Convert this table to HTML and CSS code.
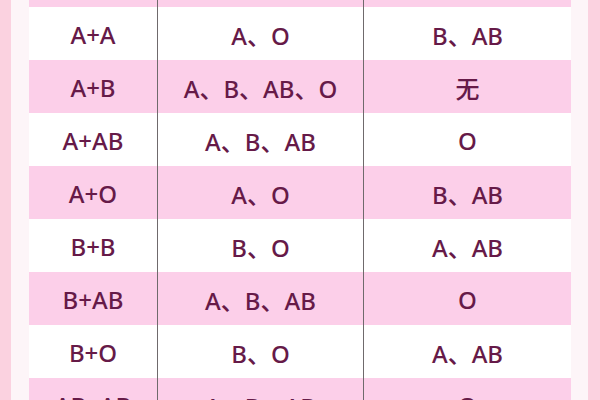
FILE: index.html
```html
<!DOCTYPE html>
<html lang="zh">
<head>
<meta charset="utf-8">
<link rel="stylesheet" href="styles.css">
</head>
<body>
<div class="frame">
  <div class="sheet">
    <div class="table">
      <div class="row pink top"><div class="cell"></div><div class="cell"></div><div class="cell"></div></div>
      <div class="row"><div class="cell">A+A</div><div class="cell">A、O</div><div class="cell">B、AB</div></div>
      <div class="row pink"><div class="cell">A+B</div><div class="cell">A、B、AB、O</div><div class="cell">无</div></div>
      <div class="row"><div class="cell">A+AB</div><div class="cell">A、B、AB</div><div class="cell">O</div></div>
      <div class="row pink"><div class="cell">A+O</div><div class="cell">A、O</div><div class="cell">B、AB</div></div>
      <div class="row"><div class="cell">B+B</div><div class="cell">B、O</div><div class="cell">A、AB</div></div>
      <div class="row pink"><div class="cell">B+AB</div><div class="cell">A、B、AB</div><div class="cell">O</div></div>
      <div class="row"><div class="cell">B+O</div><div class="cell">B、O</div><div class="cell">A、AB</div></div>
      <div class="row pink"><div class="cell">AB+AB</div><div class="cell">A、B、AB</div><div class="cell">O</div></div>
    </div>
  </div>
</div>
</body>
</html>
```
FILE: styles.css
```css
html, body {
  margin: 0;
  padding: 0;
  width: 600px;
  height: 400px;
  overflow: hidden;
}
body {
  font-family: "Noto Sans", "Noto Sans CJK SC", sans-serif;
}
.frame {
  background: #fbd2e0;
  padding: 0 12px 0 11px;
  height: 400px;
  box-sizing: border-box;
}
.sheet {
  background: #fdf5f8;
  padding: 0 17px 0 18px;
  height: 400px;
  box-sizing: border-box;
}
.table {
  background: #ffffff;
}
.row {
  display: grid;
  grid-template-columns: 128px 206px 208px;
  height: 53px;
}
.row.top {
  height: 7px;
}
.row.pink {
  background: #fccfe9;
}
.cell {
  display: flex;
  align-items: center;
  justify-content: center;
  color: #661a48;
  font-size: 24px;
  font-weight: 500;
  padding-top: 2px;
  box-sizing: border-box;
}
.cell + .cell {
  border-left: 1px solid #6f6a6c;
}
```
